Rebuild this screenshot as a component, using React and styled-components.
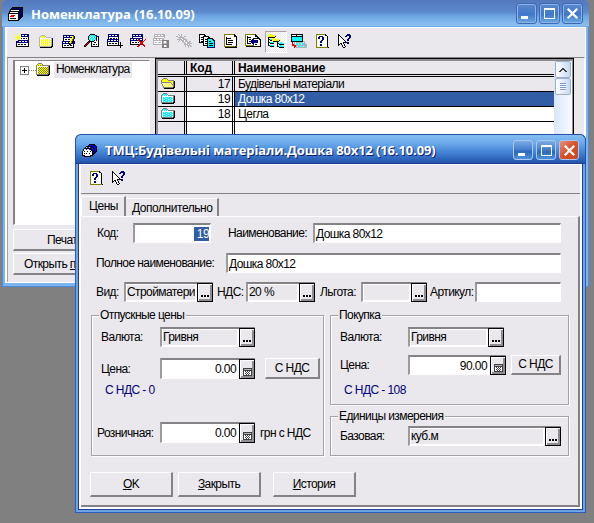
import React from "react";
import styled, { createGlobalStyle, css } from "styled-components";

const palette = {
  k: "#000000",
  w: "#ffffff",
  n: "#000080",
  b: "#0000ff",
  g: "#808080",
  d: "#404040",
  s: "#b4b2b6",
  y: "#ffff00",
  o: "#808000",
  c: "#00ffff",
  t: "#008080",
  r: "#e00000",
};

const icons = {
  cards: [
    "....kkkkkkkkkkk.",
    "...knnnnnnnnnkk.",
    "..kkkkkkkkkkknk.",
    "..kwwwwwwwwkknk.",
    ".kkkkkkkkkkknkk.",
    ".kwwwwwwwwkknnk.",
    "kkkkkkkkkkknknk.",
    "kwwwwwwwwwknknk.",
    "kwwrrrrwwwknknk.",
    "kwrrrrwwwwknknk.",
    "kwwwwwwwwwknkk..",
    "kwkkkkkkwwknk...",
    "kwwwwwwwwwkk....",
    "kkkkkkkkkkk.....",
  ],
  box: [
    ".......kkkkkk...",
    "......kbbbnbkk..",
    "....kkkkkkkbbbk.",
    "...kwbbwbbkkbbk.",
    "..kkkkkkkbbkkbk.",
    ".kwwbwwbkkbbkbk.",
    ".kwwwwwwwkkbkbk.",
    "kwkwwkwwkwkkbkk.",
    "kwwwwwwwwwkbkk..",
    "kwkwkwwkwwkkk...",
    "kwwwwwwwwwkk....",
    "kkkwwwwwkkk.....",
    "..kkkkkkk.......",
  ],
  create: [
    "y..y..nnnnnnnn..",
    ".y.y..nwwnwwnn..",
    "..yyy.nnnnnnnn..",
    "yyyyyywwwwwwwk..",
    "..yyywkwkkwkwk..",
    ".y.y.wwwwwwwwk..",
    "y..nnnnnnnnnnn..",
    ".nnnwwnwwnwwnn..",
    ".nnnnnnnnnnnnn..",
    ".kwwwwwwwwwwwk..",
    ".kwkkwkkwkkwwk..",
    ".kwwwwwwwwwwwk..",
    ".kkkkkkkkkkkkk..",
  ],
  folder: [
    "................",
    "...ssss.........",
    "..syyyys........",
    ".sywywywsssss...",
    ".swwwwwwwwwwwsk.",
    ".swywywywywywsk.",
    ".swyyywyyywyysk.",
    ".swywywywywywsk.",
    ".swyyywyyywyysk.",
    ".swywywywywywsk.",
    ".swyyywyyywyysk.",
    ".swywywywywywsk.",
    ".sssssssssssskk.",
    "..kkkkkkkkkkkk..",
  ],
  treeFolder: [
    "..gggg..........",
    ".gyyyyg.........",
    "gyoyoyoggggggg..",
    "gwwwwwwwwwwwgk..",
    "gwyoyoyoyoyogk..",
    "gwoyoyoyoyoygk..",
    "gwyoyoyoyoyogk..",
    "gwoyoyoyoyoygk..",
    "gwyoyoyoyoyogk..",
    "gwoyoyoyoyoygk..",
    "gwyoyoyoyoyogk..",
    "ggggggggggggkk..",
    ".kkkkkkkkkkkk...",
  ],
  openFolder: [
    "..gggg..........",
    ".gyyyyg.........",
    "gyyyyyygggggg...",
    "gyyyyyyyyyyygk..",
    "ggggggggggyygk..",
    "gwwywywywwgygk..",
    ".gywywywywyggk..",
    ".gwywywywywygk..",
    "..gywywywywygk..",
    "..ggggggggggkk..",
    "...kkkkkkkkkk...",
  ],
  cyanFolder: [
    "..gggg..........",
    ".gccccg.........",
    "gcwcwcwggggggg..",
    "gwwwwwwwwwwwgk..",
    "gwcwcccwcccwgk..",
    "gwcccwcccwccgk..",
    "gwcwcccwcccwgk..",
    "gwcccwcccwccgk..",
    "gwcwcccwcccwgk..",
    "ggggggggggggkk..",
    ".kkkkkkkkkkkk...",
  ],
  edit: [
    "................",
    "..nnnnnnnnnnny..",
    "..nwwnwwnwwyok..",
    "..nnnnnnnnnyok..",
    "..kwwwwwwwyyok..",
    "..kwkkwkkwyok...",
    "..kwwwwwwyyok...",
    ".nnnnnnnnyoknn..",
    ".nwwnwwnyyoknn..",
    ".nnnnnnnkoknnn..",
    ".kwwwwwwkkwwk...",
    ".kwkkwkkwkkwk...",
    ".kwwwwwwwwwwk...",
    ".kkkkkkkkkkkk...",
  ],
  find: [
    "......kkkkk.....",
    ".....kccwcckn...",
    "....kccwccccknn.",
    "....kcwccwcckwn.",
    "....kwccwccckwk.",
    "....kccwccwckwk.",
    ".....kcwcckwkwk.",
    "....kkkkkkwwwwk.",
    "...krk.kwwkkwwk.",
    "..krk..kwwwwwwk.",
    ".krk...kwkkwkwk.",
    "krk....kwwwwwwk.",
    "kk.....kkkkkkkk.",
  ],
  add: [
    ".nnnnnnnnnnn....",
    ".nwwnwwnwwnn....",
    ".nnnnnnnnnnn....",
    ".kwwwwwwwwwk....",
    ".kwkkwkkwkwk....",
    "nnnnnnnnnnnn....",
    "nwwnwwnwwnwn....",
    "nnnnnnnnnnnn....",
    "kwwwwwwwwwwk.k..",
    "kwkkwkkwkkwk.k..",
    "kwwwwwwwwwwk.k..",
    "kkkkkkkkkkkkkkkk",
    ".............k..",
    ".............k..",
  ],
  remove: [
    "..nnnnnnnnnnn...",
    "..nwwnwwnwwnn...",
    "..nnnnnnnnnnn...",
    "..kwwwwwwwwwk...",
    "nnnnnnnnnnnnn...",
    "nwwnwwnwrnwwn..r",
    "nnnnnnnnrrnnn.r.",
    "kwwwwwwwwrrkrr..",
    "kwkkwkkwkwrrr...",
    "kwwwwwwwwwrrr...",
    "kkkkkkkkkrrkrr..",
    "........rr...rr.",
    ".......rr.....r.",
  ],
  save: [
    ".sssssssssss....",
    ".swwswwswwss....",
    ".sssssssssss....",
    ".swwwwwwwwws....",
    "sssssssssss.....",
    "swwswwswwss.....",
    "sssssssssggggggg",
    "swwwwwwwwgswwsgg",
    "swsswssswgswwsgg",
    "swwwwwwwwgssssgg",
    "sssssssssggggggg",
    ".........ggwwsgg",
    ".........ggwwsgg",
    ".........ggggggg",
  ],
  disabled: [
    "..s..s..........",
    "...s.s..........",
    "ss..ss..ss......",
    "..ssssss........",
    "...sswsss.......",
    ".ssssswssss.....",
    "...s.ssswss.....",
    "..s...sswsss.ss.",
    ".......sswwsss..",
    "........sswsssss",
    "........ssssws..",
    ".........s.ssss.",
    ".........s..s.ss",
    "............s...",
  ],
  copy: [
    "kkkkkk..........",
    "kwwwwkk.........",
    "kwwwkkkkkk......",
    "kwkkkwwwwkk.....",
    "kwwwkwwwkkkkkk..",
    "kwkkkwkkkcccckk.",
    "kwwwkwwwkccccckk",
    "kwkkkwkkkckkcccn",
    "kkkkkwwwkccccccn",
    "....kwkkkckkkkcn",
    "....kwwwkccccccn",
    "....kkkkkckkkkcn",
    "........kccccccn",
    "........knnnnnnn",
  ],
  list: [
    "..ooooooooook...",
    "..owwwwwwwwwkk..",
    "..owwwwwwwwwkkk.",
    "..owkwwwwwwwwwk.",
    "..owkkkkkwwwwwk.",
    "..owkwwwwwwwwwk.",
    "..owkwkkkkkwwwk.",
    "..owkwwwwwwwwwk.",
    "..owkwkkkkkwwwk.",
    "..owkwwwwwwwwwk.",
    "..owkkkkkkwwwwk.",
    "..owwwwwwwwwwwk.",
    "..oooooooooooko.",
    "...kkkkkkkkkkkk.",
  ],
  history: [
    "ooooooooook.....",
    "owwwwwwwwwkk....",
    "owkwwwwwwwkkk...",
    "owkkkkwwwwwwkk..",
    "owkwwwwwkkkkkkk.",
    "owkwkkwnnwwwwwkk",
    "owkwwwnnnnnnnwwk",
    "owkwknnnnnnnnwwk",
    "owkwwwnnnnnnnwwk",
    "owkkkkwnnwwwwwwk",
    "owwwwwwwnwkkwwwk",
    "ooooooooowwwwwwk",
    ".kkkkkkkkkkkkkkk",
  ],
  tree: [
    ".yyy............",
    "yyyyyyy.........",
    "yyyyyyyk........",
    "kkkkkkk.........",
    "k....yyy........",
    "kkccyyyyyyy.....",
    "k.kkyyyyyyyk....",
    "k....kkkkkk.....",
    "kkcccc...k..cc..",
    "k.kkkk...kkccccc",
    "k........k.kkkkk",
    "kkcccc...k..cc..",
    "..kkkk...kkccccc",
    "...........kkkkk",
  ],
  move: [
    "kkkkkkkkkkkk....",
    "kwwwwkwwwwck....",
    "kkkkkkkkkkkk....",
    "kcccccccccck....",
    "kcccccccccck....",
    "kcccccccccck....",
    "kcccccccccck....",
    "kkkkkkkkkkkkss..",
    ".r.s.sssssssws..",
    ".r.s.cc.cc.ccss.",
    ".rrs.cc.cc.ccsss",
    ".rrrrsssssssssss",
    "...rrs.cc.cc.css",
    "...r.sssssssssss",
  ],
  help: [
    "..oooooooook....",
    "..owwwwwwwwkk...",
    "..owwnnnnwwwwk..",
    "..ownnwwnnwwwk..",
    "..ownnwwnnwwwk..",
    "..owwwwwnnwwwk..",
    "..owwwwnnwwwwk..",
    "..owwwnnwwwwwk..",
    "..owwwnnwwwwwk..",
    "..owwwwwwwwwwk..",
    "..owwwnnwwwwwk..",
    "..owwwnnwwwwwk..",
    "..owwwwwwwwwwk..",
    "..ooooooooooook.",
  ],
  pointer: [
    ".k........nnn...",
    ".kk......nnnnn..",
    ".kwk....nn..nn..",
    ".kwwk.......nn..",
    ".kwwwk.....nn...",
    ".kwwwwk...nn....",
    ".kwwwwwk..nn....",
    ".kwwwwwwk.......",
    ".kwwwwkkkknn....",
    ".kwkkwk...nn....",
    ".kk.kwwk........",
    ".k...kwk........",
    ".....kwwk.......",
    "......kk........",
  ],
  calc: [
    "ddddddddd",
    "dsssssssd",
    "ddddddddd",
    "dwdwdwdwd",
    "dwwdwdwwd",
    "dwdwdwdwd",
    "dwwdwdwwd",
    "ddddddddd",
  ],
  dots: ["kk.kk.kk", "kk.kk.kk"],
  arrowUp: ["....dd....", "...dddd...", "..dd..dd..", ".dd....dd."],
};

function PixelIcon({ name }) {
  const rows = icons[name];
  const w = Math.max(...rows.map((r) => r.length));
  return (
    <svg
      width={w}
      height={rows.length}
      viewBox={`0 0 ${w} ${rows.length}`}
      shapeRendering="crispEdges"
    >
      {rows.map((row, y) =>
        [...row].map((ch, x) =>
          palette[ch] ? (
            <rect key={`${x}-${y}`} x={x} y={y} width="1" height="1" fill={palette[ch]} />
          ) : null
        )
      )}
    </svg>
  );
}

function CaptionButtons({ active }) {
  return (
    <Captions $active={active}>
      <CaptionButton $active={active}>
        <svg width="19" height="19" viewBox="0 0 19 19">
          <rect x="4" y="12" width="7" height="3" fill="#fff" />
        </svg>
      </CaptionButton>
      <CaptionButton $active={active}>
        <svg width="19" height="19" viewBox="0 0 19 19" shapeRendering="crispEdges">
          <path d="M4 4h11v11h-11z M5 6v8h9v-8z" fill="#fff" fillRule="evenodd" />
        </svg>
      </CaptionButton>
      <CaptionButton $active={active} $close>
        <svg width="19" height="19" viewBox="0 0 19 19">
          <path d="M4.7 4.7l9.6 9.6M14.3 4.7l-9.6 9.6" stroke="#fff" strokeWidth="2.2" />
        </svg>
      </CaptionButton>
    </Captions>
  );
}

function PickField({ w, value }) {
  return (
    <Field $w={w} $pick>
      <PickValue>{value}</PickValue>
      <SmallButton>
        <PixelIcon name="dots" />
      </SmallButton>
    </Field>
  );
}

function PriceField({ w, value, h }) {
  return (
    <Field $w={w} $h={h} $pick>
      <Amount>{value}</Amount>
      <SmallButton $calc>
        <PixelIcon name="calc" />
      </SmallButton>
    </Field>
  );
}

const toolbar = [
  "create",
  "folder",
  "edit",
  "find",
  "add",
  "remove",
  "save",
  "disabled",
  "copy",
  "list",
  "history",
  "tree",
  "move",
  "help",
  "pointer",
];

const items = [
  { icon: "openFolder", code: "17", name: "Будівельні матеріали", group: true },
  { icon: "cyanFolder", code: "19", name: "Дошка 80x12", selected: true },
  { icon: "cyanFolder", code: "18", name: "Цегла" },
];

function CatalogWindow() {
  return (
    <MainWindow>
      <TitleBar>
        <PixelIcon name="cards" />
        <Title>Номенклатура (16.10.09)</Title>
        <CaptionButtons />
      </TitleBar>
      <MainClient>
        <Toolbar>
          {toolbar.map((name) => (
            <ToolButton key={name} $pressed={name === "tree"}>
              <PixelIcon name={name} />
            </ToolButton>
          ))}
        </Toolbar>
        <MainBody>
          <Side>
            <Tree>
              <Expander>
                <svg width="9" height="9" viewBox="0 0 9 9" shapeRendering="crispEdges">
                  <path d="M0 0h9v9H0zM1 1v7h7V1z" fill="#848284" fillRule="evenodd" />
                  <path d="M2 4h5v1H2zM4 2h1v5H4z" fill="#000" />
                </svg>
              </Expander>
              <TreeLine />
              <PixelIcon name="treeFolder" />
              <TreeLabel>Номенклатура</TreeLabel>
            </Tree>
            <SideButton $pad={33}>Печат</SideButton>
            <SideButton $pad={10}>
              Открыть <u>п</u>
            </SideButton>
          </Side>
          <Table>
            <Rows>
              <HeadRow>
                <Cell $first />
                <Cell $code $left>
                  Код
                </Cell>
                <Cell>Наименование</Cell>
              </HeadRow>
              {items.map((item) => (
                <ItemRow key={item.code} $group={item.group}>
                  <Cell $first>
                    <PixelIcon name={item.icon} />
                  </Cell>
                  <Cell $code>{item.code}</Cell>
                  <Cell $selected={item.selected}>{item.name}</Cell>
                </ItemRow>
              ))}
              <ItemRow $fill>
                <Cell $first />
                <Cell $code />
                <Cell />
              </ItemRow>
            </Rows>
            <Scroll>
              <ScrollButton>
                <PixelIcon name="arrowUp" />
              </ScrollButton>
              <ScrollButton $thumb>
                <Grip />
              </ScrollButton>
            </Scroll>
          </Table>
        </MainBody>
      </MainClient>
    </MainWindow>
  );
}

function ItemDialog() {
  return (
    <Dialog>
      <TitleBar $active>
        <PixelIcon name="box" />
        <Title $active>ТМЦ:Будівельні матеріали.Дошка 80x12 (16.10.09)</Title>
        <CaptionButtons active />
      </TitleBar>
      <DialogFrame>
        <DialogClient>
          <DialogToolbar>
            <PixelIcon name="help" />
            <PixelIcon name="pointer" />
          </DialogToolbar>
          <Tabs>
            <Tab $active>Цены</Tab>
            <Tab>Дополнительно</Tab>
          </Tabs>
          <TabPanel>
            <Line $top={6}>
              <Label $w={36} $left={1}>
                Код:
              </Label>
              <Field $w={78} $right>
                <Marked>19</Marked>
              </Field>
              <Label $w={85} $left={17}>
                Наименование:
              </Label>
              <Field $w={248}>Дошка 80x12</Field>
            </Line>
            <Line $top={10}>
              <Label $w={130}>Полное наименование:</Label>
              <Field $w={335}>Дошка 80x12</Field>
            </Line>
            <Line $top={9}>
              <Label $w={28}>Вид:</Label>
              <PickField w={89} value="Стройматери" />
              <Label $w={29} $left={4}>
                НДС:
              </Label>
              <PickField w={69} value="20 %" />
              <Label $w={41} $left={5}>
                Льгота:
              </Label>
              <PickField w={66} value="" />
              <Label $w={45} $left={3}>
                Артикул:
              </Label>
              <Field $w={86} />
            </Line>
            <Groups>
              <Group $h={141}>
                <Legend>Отпускные цены</Legend>
                <Line $top={11}>
                  <Label $w={59}>Валюта:</Label>
                  <PickField w={95} value="Гривня" />
                </Line>
                <Line $top={11}>
                  <Label $w={59}>Цена:</Label>
                  <PriceField w={95} h={21} value="0.00" />
                  <PushButton $w={55} $h={21} $left={10}>
                    С НДС
                  </PushButton>
                </Line>
                <Note>С НДС - 0</Note>
                <Line $top={25}>
                  <Label $w={63} $left={-4}>
                    Розничная:
                  </Label>
                  <PriceField w={95} h={21} value="0.00" />
                  <Label $left={5}>грн с НДС</Label>
                </Line>
              </Group>
              <GroupColumn>
                <Group $h={90}>
                  <Legend>Покупка</Legend>
                  <Line $top={11}>
                    <Label $w={68}>Валюта:</Label>
                    <PickField w={96} value="Гривня" />
                  </Line>
                  <Line $top={8}>
                    <Label $w={68}>Цена:</Label>
                    <PriceField w={98} value="90.00" />
                    <PushButton $w={50} $h={20} $left={5}>
                      С НДС
                    </PushButton>
                  </Line>
                  <Note $top={6}>С НДС - 108</Note>
                </Group>
                <Group $h={40}>
                  <Legend>Единицы измерения</Legend>
                  <Line $top={9}>
                    <Label $w={68}>Базовая:</Label>
                    <PickField w={153} value="куб.м" />
                  </Line>
                </Group>
              </GroupColumn>
            </Groups>
            <Actions>
              <PushButton $w={83} $h={25}>
                <u>O</u>K
              </PushButton>
              <PushButton $w={83} $h={25} $left={5}>
                <u>З</u>акрыть
              </PushButton>
              <PushButton $w={83} $h={25} $left={12}>
                <u>И</u>стория
              </PushButton>
            </Actions>
          </TabPanel>
        </DialogClient>
      </DialogFrame>
    </Dialog>
  );
}

export default function App() {
  return (
    <Desktop>
      <GlobalStyle />
      <CatalogWindow />
      <ItemDialog />
    </Desktop>
  );
}

const GlobalStyle = createGlobalStyle`
  * {
    box-sizing: border-box;
  }

  body {
    margin: 0;
    overflow: hidden;
    background: #808080;
  }

  svg {
    display: block;
    flex: none;
  }
`;

const Desktop = styled.div`
  position: relative;
  width: 594px;
  height: 523px;
  overflow: hidden;
  background: #808080;
  color: #000;
  font: 12px/14px "Liberation Sans", Arial, sans-serif;
  letter-spacing: -0.58px;
  white-space: nowrap;
`;

const MainWindow = styled.div`
  position: absolute;
  left: 2px;
  top: 0;
  width: 587px;
  height: 287px;
  display: flex;
  flex-direction: column;
  border-radius: 5px 5px 0 0;
  overflow: hidden;
  background: #7cb4ee;
  box-shadow: inset 0 0 0 1px #4a8ae0;
`;

const Dialog = styled.div`
  position: absolute;
  left: 75px;
  top: 134px;
  width: 511px;
  height: 379px;
  display: flex;
  flex-direction: column;
  border-radius: 6px 6px 0 0;
  overflow: hidden;
  background: #2c56b4;
`;

const TitleBar = styled.div`
  flex: none;
  display: flex;
  align-items: center;
  height: 27px;
  padding: 0 6px 0 6px;
  background: linear-gradient(#5478bc, #5c8acc 45%, #6ea6e2 60%, #8cc0f0 95%, #5c9ae8);

  ${(p) =>
    p.$active &&
    css`
      height: 30px;
      padding: 2px 6px 0;
      border: 1px solid #2450b0;
      border-bottom: 1px solid #1c3f98;
      border-radius: 6px 6px 0 0;
      background: linear-gradient(#86bef2, #6aa8ec 30%, #4486d6 60%, #2c60b8 90%, #2450a8);
    `}
`;

const Title = styled.div`
  flex: 1;
  margin-left: 7px;
  color: #fff;
  font: bold 13px/18px "Open Sans", sans-serif;
  letter-spacing: -0.03px;

  ${(p) =>
    p.$active &&
    css`
      letter-spacing: -0.13px;
      text-shadow: 1px 1px 0 #10206c;
    `}
`;

const Captions = styled.div`
  display: flex;
  gap: ${(p) => (p.$active ? 3 : 2)}px;
`;

const CaptionButton = styled.div`
  display: flex;
  align-items: center;
  justify-content: center;
  width: ${(p) => (p.$active ? 20 : 21)}px;
  height: ${(p) => (p.$active ? 20 : 21)}px;
  border: 1px solid ${(p) => (p.$active ? "#a8c8f0" : "#3c68b8")};
  border-radius: 3px;
  background: ${(p) =>
    p.$active && p.$close
      ? "linear-gradient(135deg, #e89080, #d85028 50%, #c84820)"
      : p.$active
        ? "linear-gradient(#7cace4, #4a80d0 45%, #2c68bc 60%, #4c90dc)"
        : "linear-gradient(#5c88cc, #4078c8 55%, #6ca8e4)"};
  box-shadow: ${(p) => (p.$active ? "none" : "inset 0 0 0 1px #8cb4e4")};
`;

const MainClient = styled.div`
  flex: 1;
  display: flex;
  flex-direction: column;
  margin: 0 3px 4px;
  border: 1px solid #fff;
  border-left-width: 2px;
  background: #ebe8ed;
`;

const Toolbar = styled.div`
  display: flex;
  gap: 1px;
  height: 29px;
  padding: 3px 0 0 5px;
`;

const ToolButton = styled.div`
  width: 22px;
  height: 22px;
  padding: 2px;
  border: 1px solid transparent;

  ${(p) =>
    p.$pressed &&
    css`
      border-color: #a4a2a6 #fff #fff #a4a2a6;
      background: repeating-conic-gradient(#fff 0 25%, #ebe8ed 0 50%) 0 0 / 2px 2px;
    `}
`;

const MainBody = styled.div`
  flex: 1;
  display: flex;
  border-top: 1px solid #848284;
  border-left: 1px solid #a4a2a6;
  border-right: 1px solid #fff;
`;

const Side = styled.div`
  flex: none;
  width: 147px;
  padding: 2px 0 0 5px;
`;

const Tree = styled.div`
  display: flex;
  width: 137px;
  height: 165px;
  margin-bottom: 4px;
  padding: 2px 0 0 5px;
  border: 1px solid #848284;
  border-width: 1px 1px 1px 2px;
  border-right-color: #fff;
  border-bottom-color: #fff;
  background: #fff;
`;

const Expander = styled.div`
  padding-top: 3px;
`;

const TreeLine = styled.div`
  width: 7px;
  height: 8px;
  border-bottom: 1px dotted #848284;
`;

const TreeLabel = styled.div`
  height: 16px;
  margin: -1px 0 0 2px;
  padding: 0 2px;
  background: #ebe8ed;
`;

const SideButton = styled.div`
  width: 137px;
  height: 22px;
  margin-bottom: 2px;
  padding: 3px 0 0 ${(p) => p.$pad}px;
  border: 1px solid #fff;
  border-bottom: 2px solid #848284;
  overflow: hidden;
`;

const Table = styled.div`
  display: flex;
  width: 419px;
  height: 220px;
  border: 1px solid #000;
  border-bottom: 0;
  padding-left: 2px;
  padding-top: 2px;
  padding-right: 1px;
  background: #8f8d92;
`;

const Rows = styled.div`
  flex: 1;
  display: flex;
  flex-direction: column;
`;

const Cell = styled.div`
  flex: 1;
  padding-left: 3px;

  ${(p) =>
    p.$first &&
    css`
      flex: none;
      width: 29px;
      border-right: 3px double #000;
    `}

  ${(p) =>
    p.$code &&
    css`
      flex: none;
      width: 48px;
      padding-right: 2px;
      text-align: ${p.$left ? "left" : "right"};
      border-right: 3px double #000;
    `}

  ${(p) =>
    p.$selected &&
    css`
      color: #fff;
      background: #315da6;
    `}
`;

const HeadRow = styled.div`
  display: flex;
  height: 16px;
  border-bottom: 3px double #000;
  background: #ebe8ed;
  font-weight: bold;
  letter-spacing: -0.05px;
`;

const ItemRow = styled.div`
  display: flex;
  height: 15px;
  line-height: 15px;
  border-bottom: 1px solid #000;
  background: ${(p) => (p.$group ? "#ebe8ed" : "#fff")};

  & > :first-child {
    padding-top: 1px;
    background: #ebe8ed;
  }

  ${(p) =>
    p.$fill &&
    css`
      flex: 1;
      height: auto;
    `}
`;

const Scroll = styled.div`
  width: 18px;
  padding: 0 1px;
  background: linear-gradient(90deg, #d8e6fa, #f8fbff);
`;

const ScrollButton = styled.div`
  display: flex;
  align-items: center;
  justify-content: center;
  height: 17px;
  border: 1px solid #9cb0cc;
  border-radius: 2px;
  background: linear-gradient(90deg, #fff, #c4d8f4);
`;

const Grip = styled.div`
  width: 6px;
  height: 8px;
  background: repeating-linear-gradient(#7c98c4 0 1px, #f4f8ff 1px 2px);
`;

const DialogFrame = styled.div`
  flex: 1;
  display: flex;
  padding: 0 4px 4px;
  background: #6ea4e2;
  box-shadow: inset 1px 0 #2c5cbc, inset -1px 0 #2c5cbc, inset 0 -1px #2c5cbc;
`;

const DialogClient = styled.div`
  flex: 1;
  display: flex;
  flex-direction: column;
  outline: 1px solid #1c3f98;
  border: 1px solid #fff;
  border-width: 1px 2px 2px 2px;
  background: #ebe8ed;
`;

const DialogToolbar = styled.div`
  display: flex;
  gap: 7px;
  height: 29px;
  padding: 6px 0 0 7px;
  border-bottom: 1px solid #848284;
`;

const Tabs = styled.div`
  display: flex;
  align-items: flex-end;
  height: 22px;
`;

const Tab = styled.div`
  height: 18px;
  padding: 2px 4px 0 6px;
  border-top: 1px solid #fff;
  border-right: 2px solid #848284;
  letter-spacing: -0.45px;

  ${(p) =>
    p.$active &&
    css`
      height: 21px;
      width: 45px;
      padding-left: 7px;
      border-left: 1px solid #fff;
      margin-bottom: -1px;
      background: #ebe8ed;
    `}
`;

const TabPanel = styled.div`
  flex: 1;
  padding-left: 15px;
  border-top: 1px solid #fff;
  border-right: 2px solid #848284;
  border-bottom: 2px solid #848284;
`;

const Line = styled.div`
  display: flex;
  align-items: center;
  margin-top: ${(p) => p.$top}px;
`;

const Label = styled.div`
  flex: none;
  width: ${(p) => (p.$w ? `${p.$w}px` : "auto")};
  margin-left: ${(p) => p.$left || 0}px;
`;

const Field = styled.div`
  flex: none;
  display: flex;
  align-items: center;
  justify-content: ${(p) => (p.$right ? "flex-end" : "flex-start")};
  width: ${(p) => p.$w}px;
  height: ${(p) => p.$h || 20}px;
  padding: ${(p) => (p.$pick ? "0" : "0 1px")};
  border: 2px solid #848284;
  border-top-color: #848284;
  border-left-color: #9c9a9e;
  border-right: 1px solid #fff;
  border-bottom: 1px solid #fff;
  background: #fff;
`;

const Marked = styled.div`
  height: 14px;
  padding-left: 3px;
  color: #fff;
  background: #315da6;
`;

const PickValue = styled.div`
  flex: 1;
  min-width: 0;
  height: 15px;
  margin: 0 2px 0 1px;
  overflow: hidden;
  background: #ebe8ed;
`;

const Amount = styled.div`
  flex: 1;
  padding-right: 3px;
  text-align: right;
`;

const SmallButton = styled.div`
  align-self: stretch;
  display: flex;
  align-items: flex-end;
  justify-content: center;
  width: 16px;
  margin: -1px -1px -1px 0;
  padding-bottom: ${(p) => (p.$calc ? 2 : 4)}px;
  border: 1px solid #000;
  background: #ebe8ed;
  box-shadow: inset 1px 1px #fff, inset -2px -2px #8f8d92;
`;

const PushButton = styled.div`
  width: ${(p) => p.$w}px;
  height: ${(p) => p.$h}px;
  margin-left: ${(p) => p.$left || 0}px;
  line-height: ${(p) => p.$h - 3}px;
  text-align: center;
  border: 1px solid #fff;
  border-right: 2px solid #848284;
  border-bottom: 2px solid #848284;
`;

const Groups = styled.div`
  display: flex;
  gap: 6px;
  margin: 13px 0 0 -5px;
`;

const Group = styled.div`
  width: 233px;
  height: ${(p) => p.$h}px;
  padding-left: 9px;
  border: 1px solid #a4a2a6;
  box-shadow: 1px 1px #fff, inset 1px 1px #fff;
`;

const GroupColumn = styled.div`
  display: flex;
  flex-direction: column;
  gap: 11px;

  & > div {
    width: 239px;
  }
`;

const Legend = styled.div`
  width: max-content;
  height: 14px;
  margin: -8px 0 -6px -2px;
  padding: 0 2px 0 1px;
  background: #ebe8ed;
`;

const Note = styled.div`
  margin: ${(p) => p.$top || 2}px 0 0 4px;
  padding-top: 2px;
  color: #000080;
`;

const Actions = styled.div`
  display: flex;
  margin: 16px 0 0 -6px;
`;
